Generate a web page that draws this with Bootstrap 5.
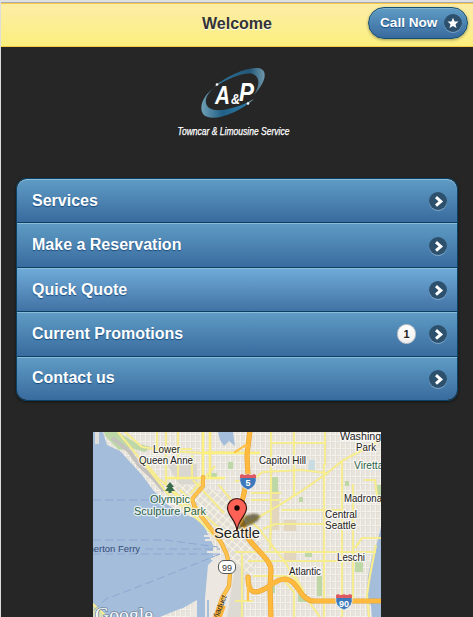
<!DOCTYPE html>
<html lang="en">
<head>
<meta charset="utf-8">
<meta name="viewport" content="width=device-width, initial-scale=1">
<title>Welcome</title>
<link href="https://cdn.jsdelivr.net/npm/bootstrap@5.3.0/dist/css/bootstrap.min.css" rel="stylesheet">
<style>
html,body{height:617px;overflow:hidden}
body{background:#262626;font-family:"Liberation Sans",Arial,sans-serif;border-left:1px solid #ddd}
.topedge{height:3px;background:#e0e0e0;border-bottom:1px solid #a9abb0;margin-left:-1px}
.bar{height:44px;background:linear-gradient(#fceda7,#fbef7e);border-top:1px solid #f7c942;border-bottom:1px solid #f7c942}
.bar h1{font-size:16px;line-height:20px;color:#333;text-shadow:0 1px 0 #fff;padding-bottom:2px}
.callbtn{right:5px;top:3px;width:100px;height:32px;padding:0 4px 0 11px;border:1px solid #145072;border-radius:16px;background:linear-gradient(#5f9cc5,#396b9e);color:#fff;font-size:13.6px;box-shadow:0 1px 3px rgba(0,0,0,.35),inset 0 1px 0 rgba(255,255,255,.2);text-shadow:0 1px 1px #194b7e}
.callbtn:hover{color:#fff}
.callbtn span{padding-top:1px}
.brandrow{height:131px}
.menu{width:442px;margin-left:15px;height:223px;border:1px solid #0b4162;border-radius:10px;overflow:hidden;box-shadow:0 1px 3px rgba(0,0,0,.5)}
.menu .list-group-item{flex:1 1 0;min-height:0;padding:0 9px 0 15px;border:0;border-bottom:1px solid #0b4162;background:linear-gradient(#5f9cc5,#396b9e);box-shadow:inset 0 1px 0 #8abbd9;color:#fff;font-size:16px;line-height:20px;text-shadow:0 1px 1px #194b7e}
.menu .list-group-item:last-child{border-bottom:0}
.menu .list-group-item svg{margin-top:1px}
.menu .hot{background:linear-gradient(#6facd9,#4272a5)}
.count{width:19px;height:20px;margin-right:12px;border-radius:10px;background:linear-gradient(#fff,#eee);border:1px solid #ccc;color:#222;font-size:11px;line-height:18px;text-shadow:0 1px 0 #fff}
.mapbox{width:288px;height:185px;margin:31px 0 0 92px}
svg{display:block;flex:none}
.lbl{font-family:"Liberation Sans",Arial,sans-serif;font-size:10.5px;fill:#222;stroke:#fff;stroke-opacity:.7;stroke-width:2.5px;paint-order:stroke;stroke-linejoin:round}
.parklbl{fill:#2b6448}
.city{font-size:14px}
.tagline{font-family:"Liberation Sans",Arial,sans-serif;font-style:italic;font-size:10px;stroke:#fff;stroke-width:.25px}
</style>
<script src="https://cdn.jsdelivr.net/npm/bootstrap@5.3.0/dist/js/bootstrap.bundle.min.js"></script>
</head>
<body>
<svg width="0" height="0" class="position-absolute" aria-hidden="true"><defs>
<symbol id="arrow" viewBox="0 0 20 20"><circle cx="10" cy="11" r="9" fill="#a0c0dc" opacity=".65"/><circle cx="10" cy="10" r="9" fill="#2d506d"/><path d="M8 6.200 L12.800 10.400 L8 14.600" fill="none" stroke="#fff" stroke-width="3"/></symbol>
</defs></svg>
<div class="topedge"></div>
<header class="bar position-relative d-flex align-items-center justify-content-center">
<h1 class="m-0 fw-bold">Welcome</h1>
<a href="#" class="callbtn position-absolute d-flex align-items-center justify-content-between fw-bold text-decoration-none"><span>Call Now</span>
<svg width="20" height="20" viewBox="0 0 20 20"><circle cx="10" cy="11" r="9" fill="#a0c0dc" opacity=".6"/><circle cx="10" cy="10" r="9" fill="#2d506d"/><path d="M10 4.7 L11.6 8.4 L15.5 8.6 L12.5 11.2 L13.5 15 L10 12.9 L6.5 15 L7.5 11.2 L4.5 8.6 L8.4 8.4Z" fill="#fff"/></svg></a>
</header>
<div class="brandrow">
<svg width="472" height="131" viewBox="1 47 472 131" aria-label="A&amp;P Towncar &amp; Limousine Service">
<defs>
<linearGradient id="swA" x1="0" x2="1"><stop offset="0" stop-color="#d9f0ff"/><stop offset=".15" stop-color="#2b7099"/><stop offset=".7" stop-color="#235878"/><stop offset="1" stop-color="#6f98ac"/></linearGradient>
<linearGradient id="swB" x1="0" x2="1"><stop offset="0" stop-color="#6f9fb5"/><stop offset=".4" stop-color="#216087"/><stop offset=".85" stop-color="#2b7ba8"/><stop offset="1" stop-color="#dff4ff"/></linearGradient>
</defs>
<path d="M214 87 C226 76 247 67 258 68 C268 69 267 81 254 95 C260 85 260 77 253 74 C243 72 230 78 214 87Z" fill="url(#swA)"/>
<path d="M214 88 C202 96 199 108 203 114 C210 123 236 115 254 99 C245 104 237 107 228 109 C215 112 207 109 206 103 C205 98 208 93 214 88Z" fill="url(#swB)"/>
<circle cx="217" cy="84.500" r="1.300" fill="#fff"/><circle cx="248" cy="103.500" r="1.300" fill="#fff"/>
<g fill="#fff" font-family="'Liberation Sans',Arial,sans-serif" font-weight="700" font-style="italic"><text x="215" y="104" font-size="26" textLength="15" lengthAdjust="spacingAndGlyphs">A</text><text x="231" y="104" font-size="15" textLength="9" lengthAdjust="spacingAndGlyphs">&amp;</text><text x="239" y="101" font-size="25" textLength="15" lengthAdjust="spacingAndGlyphs">P</text></g>
<text class="tagline" x="177.500" y="134.500" fill="#fff" textLength="112" lengthAdjust="spacingAndGlyphs">Towncar &amp; Limousine Service</text>
</svg>
</div>
<nav class="menu list-group d-flex flex-column">
<a href="#" class="list-group-item d-flex align-items-center justify-content-between fw-bold"><span>Services</span><svg width="20" height="20"><use href="#arrow"/></svg></a>
<a href="#" class="list-group-item d-flex align-items-center justify-content-between fw-bold"><span>Make a Reservation</span><svg width="20" height="20"><use href="#arrow"/></svg></a>
<a href="#" class="list-group-item hot d-flex align-items-center justify-content-between fw-bold"><span>Quick Quote</span><svg width="20" height="20"><use href="#arrow"/></svg></a>
<a href="#" class="list-group-item d-flex align-items-center fw-bold"><span class="me-auto">Current Promotions</span><span class="count text-center">1</span><svg width="20" height="20"><use href="#arrow"/></svg></a>
<a href="#" class="list-group-item d-flex align-items-center justify-content-between fw-bold"><span>Contact us</span><svg width="20" height="20"><use href="#arrow"/></svg></a>
</nav>
<div class="mapbox overflow-hidden">
<svg width="288" height="185" viewBox="93 432 288 185">
<defs>
<pattern id="blocks" width="5" height="7" patternUnits="userSpaceOnUse"><rect width="5" height="7" fill="#e9e4db"/><path d="M0 .5H5M.5 0V7" stroke="#f4f2ed" stroke-width="1"/><path d="M0 1.500H5M1.500 0V7" stroke="#dedad2" stroke-width=".4"/></pattern>
<pattern id="diag" width="6" height="6" patternUnits="userSpaceOnUse" patternTransform="rotate(42)"><rect width="6" height="6" fill="#e3ded5"/><path d="M0 .5H6M.5 0V6" stroke="#f8f5e6" stroke-width="1"/></pattern>
<filter id="soft"><feGaussianBlur stdDeviation="1.200"/></filter>
<path id="roads" d="M118 432L146 466L168 494L196 518L210 530M125 432L142 447L166 451L205 453M145 462L158 478L178 495L204 520M157 432V449M166 432V484M178 432V480M203 432V480M210 432V478M192 455V477M150 449H192M166 478H225M215 466L190 494M203 452L260 453M219 485L240 511L260 530L285 562L304 595L320 617M180 490L211 521L233 540M193 480L224 513M170 489L214 536L226 550M271 432V520L270 550M294 432V495M272 443H326M325 432V465M342 461V617M353 484V601M381 440L368 447L342 461L326 474L300 492L281 504L257 518L238 530M235 481L254 480L262 472L302 470L326 473M251 493H281M251 500H281M281 510H342M324 464V617M263 529L275 524H342L355 525M235 552H376M248 561H352M242 554V617M253 576H295L304 592M282 578L294 592V617M235 601H253M364 480H375L377 495L381 502M381 538H362L355 548M376 545L370 575L367 595L369 617M93 604L107 617"/>
</defs>
<rect x="93" y="432" width="288" height="185" fill="url(#blocks)"/>
<!-- downtown and industrial blocks -->
<path d="M165 484 L205 486 L240 500 L262 545 L250 580 L232 580 L226 548 L205 524Z" fill="url(#diag)"/>
<path d="M167 464h30v20h-18z" fill="#dad7d0"/><path d="M205 560h30v57h-45z" fill="#ece8e1"/><path d="M235 567h9v50h-17z" fill="#dddad3"/>
<path d="M284 520h12v11h-12zM270 490h9v40h-9zM284 552h12v8h-12z" fill="#e2d6bf"/>
<g fill="#bdd8a6"><path d="M104 432h14l18 11 15 4-6 5-14-4-12 2-14-14z"/><path d="M272 477h6v15h-6zM208 473h9v5h-9zM228 462h5v7h-5zM299 497h4v5h-4zM317 576h5v20h-5zM355 561h8v11h-8zM305 553h7v4h-7zM345 481h4v5h-4zM268 586h7v7h-7zM376 485h5v11h-5zM298 594h9v8h-9z"/></g>
<!-- water -->
<g fill="#a3bddb"><path d="M93 432 L103 432 L107 445 L120 451 L131 463 L142 475 L153 490 L168 505 L183 514 L197 519 L204 526 L213 545 L213 560 L208 565 L205 598 L197 600 L183 608 L177 610 L160 617 H93Z"/><path d="M218 432H233L235 446L229 441L224 446L220 440Z"/><path d="M381 527 L377 543 L372 557 L368 576 L367 597 L371 606 L372 617H381Z"/><path d="M309 460h6v10h-7z" fill="#c8dce1"/><path d="M197 598h8v19h-8zM207 600h2v17h-2z"/></g>
<path d="M95 432h4v12h-4z" fill="#dfdeda"/><path d="M93 604L109 617H93Z" fill="#d4dfb9"/>
<path d="M112 438L129 451L139 465L154 479L164 491" fill="none" stroke="#c4c2be" stroke-width="4"/>
<path d="M204 536h9M205 540h12M207 552h13M211 559h14" stroke="#eae7e0" stroke-width="2"/>
<!-- streets -->
<use href="#roads" fill="none" stroke="#e6dca0" stroke-width="2.200"/>
<use href="#roads" fill="none" stroke="#faf08c" stroke-width="1.500"/>
<path d="M203 453H260M166 478H225M203 432V478M210 432V478" fill="none" stroke="#fbf07f" stroke-width="2.400"/>
<!-- highways -->
<g fill="none" stroke-linejoin="round" stroke-linecap="round">
<path d="M250 430L247 455L248 475L242 502L241 520L248 538C256 550 271 560 271 570L270 587L271 619M248 577C248 590 252 594 260 591C270 588 275 579 285 579C299 580 299 601 315 601H383" stroke="#e8a534" stroke-width="5.200"/>
<path d="M250 430L247 455L248 475L242 502L241 520L248 538C256 550 271 560 271 570L270 587L271 619M248 577C248 590 252 594 260 591C270 588 275 579 285 579C299 580 299 601 315 601H383" stroke="#ffb93c" stroke-width="4"/>
<path d="M203 477V486L192 499L195 508L208 525L221 542L227 555L230 574L229 586L222 598L215 619" stroke="#e6a438" stroke-width="4.200"/><path d="M203 477V486L192 499L195 508L208 525L221 542L227 555L230 574L229 586L222 598L215 619" stroke="#ffc34c" stroke-width="3"/>
<path d="M235 452L246 445M248 577V600" stroke="#ffc34c" stroke-width="2.200"/></g>
<path d="M222 605L217 619" stroke="#ffb33b" stroke-width="8"/>
<!-- ferry lanes -->
<path d="M93 500H180M93 540H165L218 547M145 549H220M93 554H220M220 554L153 581L106 599L94 610" fill="none" stroke="#8da8d2" stroke-width="1" stroke-dasharray="8 4"/>
<path d="M170 482L174 487H172L175 491H171.500V493H168.500V491H165L168 487H166Z" fill="#386b4b"/>
<g class="lbl">
<text x="153" y="453" textLength="27" lengthAdjust="spacingAndGlyphs">Lower</text><text x="139" y="464" textLength="54" lengthAdjust="spacingAndGlyphs">Queen Anne</text>
<text x="259" y="464" textLength="47" lengthAdjust="spacingAndGlyphs">Capitol Hill</text><text x="340" y="440" textLength="56" lengthAdjust="spacingAndGlyphs">Washington</text><text x="356" y="451" textLength="20" lengthAdjust="spacingAndGlyphs">Park</text>
<text x="344" y="502" textLength="38" lengthAdjust="spacingAndGlyphs">Madrona</text><text x="325" y="518" textLength="32" lengthAdjust="spacingAndGlyphs">Central</text><text x="325" y="529" textLength="31" lengthAdjust="spacingAndGlyphs">Seattle</text><text x="337" y="561" textLength="28" lengthAdjust="spacingAndGlyphs">Leschi</text><text x="289" y="575" textLength="32" lengthAdjust="spacingAndGlyphs">Atlantic</text>
</g>
<g class="lbl parklbl"><text x="150" y="503" textLength="40" lengthAdjust="spacingAndGlyphs" style="font-size:11.500px">Olympic</text><text x="134" y="514.500" textLength="72" lengthAdjust="spacingAndGlyphs" style="font-size:11.500px">Sculpture Park</text><text x="354" y="469" textLength="39" lengthAdjust="spacingAndGlyphs" style="font-size:11.500px">Viretta P</text></g>
<text class="lbl" x="86" y="552" textLength="54" lengthAdjust="spacingAndGlyphs" style="fill:#354a78;stroke:none;font-size:9.500px">merton Ferry</text>
<text transform="translate(217 621) rotate(-68)" class="lbl" style="font-size:8px;stroke:none">Viaduct</text>
<path d="M237 530L245 516Q256 511 260 516Q260 521 250 525Z" fill="#3a3310" opacity=".65" filter="url(#soft)"/>
<text class="lbl city" x="214" y="537.500" textLength="46" lengthAdjust="spacingAndGlyphs">Seattle</text>
<path d="M237 531C236 519 227.500 516 227.500 508A9.500 9.500 0 0 1 246.500 508C246.500 516 238 519 237 531Z" fill="#fe6256" stroke="#391512" stroke-width="1.200"/><circle cx="237" cy="508" r="2.700" fill="#160403"/>
<g font-family="'Liberation Sans',Arial,sans-serif" font-weight="700" font-size="9" text-anchor="middle"><path d="M240 476L242 474Q245 476 248 474Q251 476 254 474L256 476Q258 486 248 490Q238 486 240 476Z" fill="#3d78ba" stroke="#fff" stroke-width=".7"/><path d="M240 478V475L242 474Q245 476 248 474Q251 476 254 474L256 475V478Z" fill="#df5962"/><text x="248" y="486" fill="#fff">5</text>
<path d="M336 597L338 595Q341 597 344 595Q347 597 350 595L352 597Q354 606 344 610Q334 606 336 597Z" fill="#3d78ba" stroke="#fff" stroke-width=".7"/><path d="M336 598V595L338 594Q341 596 344 594Q347 596 350 594L352 595V598Z" fill="#df5962"/><text x="344" y="606.500" fill="#fff">90</text>
<rect x="218.500" y="560.500" width="17" height="13" rx="5.500" fill="#fff" stroke="#555"/><text x="227" y="570.500" fill="#333" font-weight="400">99</text></g>
<text x="95" y="621" font-family="'Liberation Serif',serif" font-size="19" textLength="58" lengthAdjust="spacingAndGlyphs" fill="#f8fafc" stroke="#72879e" stroke-width="1.500" paint-order="stroke">Google</text>
</svg>
</div>
</body>
</html>
